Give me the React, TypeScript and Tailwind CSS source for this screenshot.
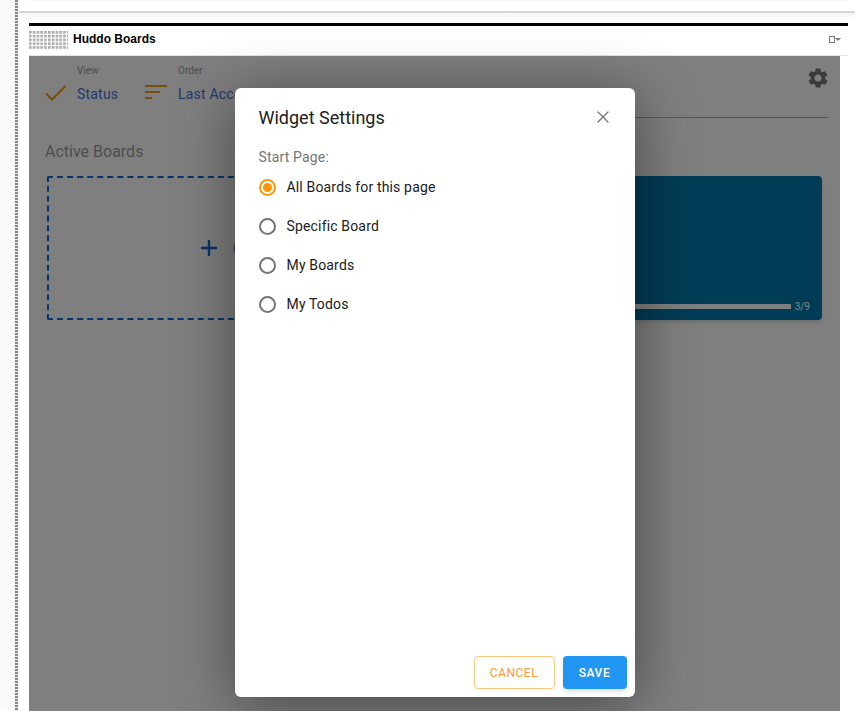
import React from 'react';
import { Plus, X } from 'lucide-react';
import { MdSettings } from 'react-icons/md';

const options = ['All Boards for this page', 'Specific Board', 'My Boards', 'My Todos'];

const Radio = ({ label, checked }: { label: string; checked?: boolean }) => (
  <div className="flex h-[39px] items-center">
    <span
      className={`flex h-[17px] w-[17px] items-center justify-center rounded-full border-2 ${
        checked ? 'border-[#ff9800]' : 'border-[#757575]'
      }`}
    >
      {checked && <span className="h-[9px] w-[9px] rounded-full bg-[#ff9800]" />}
    </span>
    <span className="ml-[11px] text-[14px] tracking-[0.16px] text-[#212121]">{label}</span>
  </div>
);

const DottedLogo = () => (
  <svg width="39" height="19" className="shrink-0">
    <defs>
      <pattern id="dots" width="3.8" height="3.8" patternUnits="userSpaceOnUse">
        <rect width="2.6" height="2.6" fill="#a8a8a8" />
      </pattern>
    </defs>
    <rect width="39" height="19" fill="url(#dots)" />
  </svg>
);

export default function App() {
  return (
    <div className="flex h-[711px] w-[855px] overflow-hidden bg-white font-['Roboto',sans-serif]">
      {/* Left page gutter */}
      <div className="flex h-full w-[19px] shrink-0 justify-end bg-[#fafafa] pr-[1px]">
        <div className="h-full w-[3px] bg-[repeating-linear-gradient(to_bottom,#8a8a8a_0,#8a8a8a_2px,#e6e6e6_2px,#e6e6e6_3px)]" />
      </div>

      <div className="flex min-w-0 flex-1 flex-col">
        <div className="h-[13px] shrink-0 border-b-2 border-[#d6d6d6] bg-white">
          <div className="ml-[10px] mr-[7px] h-[1px] bg-[#f5f5f5]" />
        </div>
        <div className="h-[10px] shrink-0 bg-gradient-to-b from-[#f6f6f6] to-white" />

        <div className="ml-[10px] mr-[7px] flex min-h-0 flex-1 flex-col border-t-[3px] border-black">
          {/* Widget header */}
          <div className="flex h-[30px] shrink-0 items-center border-b border-[#e4e4e4] pr-[7px]">
            <DottedLogo />
            <span className="mb-[3px] ml-[5px] font-['Liberation_Sans',sans-serif] text-[12px] font-bold text-black">
              Huddo Boards
            </span>
            <span className="mb-[3px] ml-auto flex items-center">
              <span className="h-[7px] w-[6px] border border-[#777]" />
              <span className="h-0 w-0 border-x-[3px] border-t-[3px] border-x-transparent border-t-[#777]" />
            </span>
          </div>

          {/* Widget body with dialog backdrop */}
          <div className="relative mr-[8px] min-h-0 flex-1 bg-white">
            <div className="flex h-[62px] items-start pl-[16px] pr-[12px]">
              <svg width="22" height="18" viewBox="0 0 22 18" className="mt-[28px]" fill="none" stroke="#f09a1e" strokeWidth="2.2">
                <path d="M1 9.5 L7 15.5 L20.5 2" />
              </svg>
              <div className="ml-[10px] w-[68px]">
                <div className="mt-[9px] text-[10px] leading-[12px] text-[#9c9c9c]">View</div>
                <div className="mt-[8px] text-[14px] leading-[18px] tracking-[0.2px] text-[#3f74dc]">Status</div>
              </div>
              <svg width="22" height="16" viewBox="0 0 22 16" className="mt-[29px]" fill="#f09a1e">
                <rect x="0" y="0" width="22" height="2" />
                <rect x="0" y="6" width="15" height="2" />
                <rect x="0" y="12" width="7" height="2" />
              </svg>
              <div className="ml-[11px] w-[110px]">
                <div className="mt-[9px] text-[10px] leading-[12px] text-[#9c9c9c]">Order</div>
                <div className="mt-[8px] text-[14px] leading-[18px] tracking-[0.2px] text-[#3f74dc]">Last Accessed</div>
              </div>
              <div className="relative h-[62px] flex-1 border-b border-[#aaa]">
                <MdSettings className="absolute right-[-2px] top-[10px] h-[24px] w-[24px] text-[#777]" />
              </div>
            </div>

            <div className="pl-[16px] pt-[23px] text-[16px] leading-[22px] text-[#9c9c9c]">Active Boards</div>

            <div className="mt-[13px] grid h-[144px] grid-cols-[388px_1fr] gap-[8px] pl-[18px] pr-[18px]">
              <div className="flex items-center justify-center rounded-[2px] border-2 border-dashed border-[#0a6ad8] text-[18px] text-[#3f74dc]">
                <Plus className="h-[24px] w-[24px] text-[#0a6ad8]" strokeWidth={2.4} />
                <span className="ml-[12px]">Create</span>
              </div>
              <div className="relative rounded-[4px] bg-[#0079ad] shadow-md">
                <div className="absolute bottom-[11px] left-[8px] right-[31px] h-[5px] bg-white" />
                <span className="absolute bottom-[7px] right-[12px] text-[10px] leading-[12px] text-white">3/9</span>
              </div>
            </div>

            {/* Backdrop and dialog */}
            <div className="absolute inset-0 flex justify-center bg-black/50">
              <div className="mt-[32px] flex h-[609px] w-[400px] flex-col rounded-[6px] bg-white shadow-[0_8px_60px_rgba(0,0,0,0.45)]">
                <div className="flex items-center justify-between pl-[24px] pr-[22px] pt-[17px]">
                  <h2 className="text-[18px] leading-[26px] text-[#212121]">Widget Settings</h2>
                  <X className="mt-[-2px] h-[20px] w-[20px] text-[#757575]" strokeWidth={1.5} />
                </div>
                <div className="flex-1 pl-[24px] pt-[16px]">
                  <div className="mb-[1px] text-[14px] leading-[20px] tracking-[0.16px] text-[#757575]">Start Page:</div>
                  {options.map((o, i) => (
                    <Radio key={o} label={o} checked={i === 0} />
                  ))}
                </div>
                <div className="flex justify-end gap-[8px] pb-[8px] pr-[8px]">
                  <button className="h-[33px] w-[81px] rounded-[4px] border border-[#ffc777] text-[12px] font-normal tracking-[0.5px] text-[#ff9838]">
                    CANCEL
                  </button>
                  <button className="h-[33px] w-[64px] rounded-[4px] bg-[#2196f3] text-[12px] font-medium tracking-[0.6px] text-white shadow-md">
                    SAVE
                  </button>
                </div>
              </div>
            </div>
          </div>
        </div>
      </div>
    </div>
  );
}
